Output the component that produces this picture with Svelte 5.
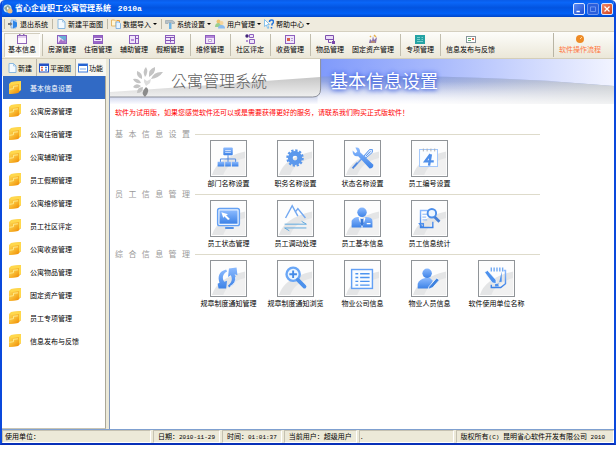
<script>
  const doc = '<path d="M2 .5h4.5L9 3v6.500H2z" fill="#f4faff" stroke="#8bb9e0"/><path d="M6.500 .5V3H9" fill="none" stroke="#8bb9e0" stroke-width=".7"/>';
  const menus = [
    { text: '退出系统', sep: true, icon: '<path d="M3 1h5v8H3z" fill="#c4dcf7" stroke="#78a8dc" stroke-width=".7"/><path d="M0 4h2V3l2.500 2L2 7V6H0z" fill="#777"/><path d="M5 1.500l4 2v4L5 9.500z" fill="#2f86e8"/>' },
    { text: '新建平面图', sep: true, icon: doc },
    { text: '数据导入', sep: true, arrow: true, icon: '<path d="M.5 1h3L5 2.500V7H.5z" fill="#fff6d8" stroke="#e0a84b" stroke-width=".8"/><path d="M5 3h3l1.500 1.500V9.500H5z" fill="#e8f4ff" stroke="#6ca6e0" stroke-width=".8"/><path d="M5.500 1.500h3v1.500" fill="none" stroke="#f0a030"/>' },
    { text: '系统设置', sep: true, arrow: true, icon: '<path d="M.5 1.500h7l2 1.500v1.500H7L6 3.500H4L3 4.500H.5z" fill="#b4c0c8" stroke="#87949d" stroke-width=".5"/><path d="M4 4h2.500v6H4z" fill="#6eb3e4"/>' },
    { text: '用户管理', arrow: true, icon: '<circle cx="3.500" cy="2.500" r="2" fill="#eec36d"/><path d="M0 8q0-4 3.500-4T7 8z" fill="#9bcf8d"/><circle cx="6.500" cy="4" r="2" fill="#f6d49a"/><path d="M3 9.500Q3 6 6.500 6T10 9.500z" fill="#8abcf0"/>' },
    { text: '帮助中心', arrow: true, icon: '<path d="M.5 .5v7L2.300 6l1.500 3.500 1-.5L3.500 5.500h2z" fill="#fff" stroke="#69b5eb" stroke-width=".8"/><path d="M5.500 3Q5.500 1 7.500 1t2 2q0 1-1.500 2v1.500M7.500 8v1.500" fill="none" stroke="#2274dc" stroke-width="1.500"/>' }
  ];
  const frame = '<rect x=".5" y="1.500" width="9" height="8" fill="#f0e5fa" stroke="#8d5fbe"/>';
  const tools = [
    { text: '基本信息', active: true, icon: '<rect x=".5" y="1.500" width="9" height="8" fill="#fff8ff" stroke="#8f64b8"/><path d="M1 3h8" stroke="#c4a4df"/><path d="M2 .5h1.500M6 .5h1.500" stroke="#8f64b8"/>', sep: true },
    { text: '房源管理', icon: frame + '<path d="M1 2h8v6z" fill="#6aaed6"/><path d="M1 9l3-4 2 2 2-2 1 4z" fill="#a873c8"/>' },
    { text: '住宿管理', icon: frame + '<path d="M1 3h8M1 8h8" stroke="#9b67c9" stroke-width="2"/><path d="M2.500 5.500h5" stroke="#5a338d"/>' },
    { text: '辅助管理', icon: frame + '<path d="M6.500 2v7M7 4.500h2" stroke="#8555b7"/><path d="M2 6h3" stroke="#bd8fe0" stroke-width="2"/>' },
    { text: '假期管理', icon: frame + '<path d="M1 3.500h8M1 6.500h8M5.500 3.500v5" stroke="#8555b7"/>', sep: true },
    { text: '维修管理', icon: frame + '<path d="M1 3h8" stroke="#b385d8" stroke-width="2"/><path d="M3.500 5.500h3v2h-3z" fill="#fff" stroke="#ab8ac8" stroke-width=".7"/>', sep: true },
    { text: '社区评定', icon: '<circle cx="2" cy="2" r="1.700" fill="#432579"/><path d="M4.500 .5h4v3h-4zM4.500 5.500h5v4h-5z" fill="#eee3f8" stroke="#8d5fbe"/><circle cx="2" cy="7" r="1" fill="#9d6fc6"/>', sep: true },
    { text: '收费管理', icon: frame + '<rect x="2" y="4" width="3" height="3" fill="#d86049"/><path d="M6 4.500h2M6 6.500h2" stroke="#b7a1cf"/>', sep: true },
    { text: '物品管理', icon: '<path d="M.5 1.500h8v4h-8z" fill="#eadcf6" stroke="#7d4fae"/><path d="M3.500 5v3.500h3M8.500 5v3" fill="none" stroke="#7d4fae"/><path d="M7 7h3v3H7z" fill="#7847ab"/>' },
    { text: '固定资产管理', icon: '<path d="M1 9l1-4 2 2 1-5 1 4 3-3-1 6z" fill="#8b70aa"/><path d="M6 1l2 2M2 2l1 1" stroke="#e8b14d" stroke-width="1.500"/><path d="M3 8h4" stroke="#dda34a"/>', sep: true },
    { text: '专项管理', icon: '<rect y="1" width="10" height="9" fill="#25a3a4"/><path d="M2 3.500h3M2 5.500h3M6.500 3.500H8M6.500 5.500H8M2 7.500h6" stroke="#9fe4df" stroke-width=".7"/>', sep: true },
    { text: '信息发布与反馈', icon: '<rect x=".5" y="2.500" width="9" height="6" fill="#fff" stroke="#87949c"/><path d="M2 4.500h3M2 6.500h3" stroke="#66b27a"/><path d="M6 4h2v2H6z" fill="#df6a4d"/>' },
    { text: '软件操作流程', end: true, icon: '<circle cx="5" cy="5" r="4" fill="#ee8b26"/><path d="M5 5l2-2" stroke="#ffd79a"/>' }
  ];
  const sideTabs = [
    { text: '新建', icon: doc },
    { text: '平面图', icon: '<rect x=".5" y="1" width="9" height="8" fill="#fff" stroke="#2553c6"/><path d="M1 2h8" stroke="#2553c6" stroke-width="2"/><path d="M2 4.500h2M2 7h2" stroke="#df6149" stroke-width="1.500"/><path d="M6 4.500h2M6 7h2" stroke="#438be5" stroke-width="1.500"/>' },
    { text: '功能', active: true, icon: '<rect x=".5" y="1" width="9" height="8" fill="#fff" stroke="#3978dc"/><path d="M1 2h8" stroke="#2563d1" stroke-width="2"/><path d="M2 6h6" stroke="#74a6ea"/>' }
  ];
  const nav = ['基本信息设置', '公寓房源管理', '公寓住宿管理', '公寓辅助管理', '员工假期管理', '公寓维修管理', '员工社区评定', '公寓收费管理', '公寓物品管理', '固定资产管理', '员工专项管理', '信息发布与反馈'];
  let current = $state(0);
  const B = 'fill="url(#ink)"';
  const L = 'fill="none" stroke="url(#ink)"';
  const sections = [
    { title: '基   本   信   息   设   置', items: [
      { text: '部门名称设置', icon: `<rect x="13" y="7" width="10" height="8" rx="1" ${B}/><path d="M15 10h6M15 12h6" stroke="#d6e6ff"/><path d="M18 15v4M10 23v-4h16v4M18 19v4" fill="none" stroke="#4c86e0"/><path d="M7 22h7v5H7zM15 22h6v5h-6zM22 22h7v5h-7z" ${B}/>` },
      { text: '职务名称设置', icon: `<circle cx="18" cy="18" r="5" fill="none" stroke="#5b98ec" stroke-width="5"/><circle cx="18" cy="18" r="8" fill="none" stroke="#5b98ec" stroke-width="2.500" stroke-dasharray="2.400 1.789"/>` },
      { text: '状态名称设置', icon: `<path d="M10 27L27 9" stroke="#6fa0ea" stroke-width="1.500"/><path d="M20 16l6-7 3 0 0 3-7 6z" fill="#dbe9ff" stroke="#5d98ec"/><path d="M22 16l5-5" stroke="#4f8ee8"/><path d="M8 10l3 3 2-2-2-4q5-1 5 5l14 13q0 4-4 4L14 16Q8 17 8 10z" ${B}/><path d="M8 29l5-6" stroke="#4e87df" stroke-width="2"/>` },
      { text: '员工编号设置', icon: `<rect x="8" y="9" width="19" height="18" fill="#fafdff" stroke="#9ec4fa"/><path d="M12 8v3M16 8v3M20 8v3M24 8v3" stroke="#aaa"/><path d="M19.500 14L14 21.500h9M20 14L18 26" fill="none" stroke="#4e8fea" stroke-width="2.500"/>` }
    ] },
    { title: '员   工   信   息   管   理', items: [
      { text: '员工状态管理', icon: `<rect x="7" y="8" width="23" height="18" rx="2" fill="#edf5ff" stroke="#64a1f4" stroke-width="1.500"/><rect x="9" y="10" width="19" height="14" ${B}/><path d="M11 12l7 2-2 1 4 4-2 1-4-4-1 2z" fill="#fff"/><path d="M15 28.500h9" stroke="#5592e6" stroke-width="2"/>` },
      { text: '员工调动处理', icon: `<path d="M8 18l7-13 6 11M18 12l3-4 8 10" fill="none" stroke="#72a8f1" stroke-width="1.500"/><path d="M7 24.500h23l-5-3M30 28.500H7l5 3" fill="none" stroke="#5aa5dd"/>` },
      { text: '员工基本信息', icon: `<circle cx="18" cy="12" r="5" ${B}/><path d="M7 28v-7q2-4 7-4l4 3 4-3q7 0 7 4v7z" ${B}/><path d="M15 18l3 9 3-9M23 24h4" fill="none" stroke="#fff" stroke-width="1.300"/><path d="M17 19h2l1 5-2 3-2-3z" fill="#3979da"/>` },
      { text: '员工信息统计', icon: `<path d="M17 10H9v18h2M22 22v6H11l-3-4h4v4" ${L} stroke-width="1.500"/><path d="M11 14h6M11 17h4M11 20h5" stroke="#82b2f5"/><circle cx="21" cy="13" r="4.500" fill="#edf6ff" stroke="#4c8feb" stroke-width="2"/><path d="M24 17l5 5" stroke="#467fd5" stroke-width="3"/>` }
    ] },
    { title: '综   合   信   息   管   理', items: [
      { text: '规章制度通知管理', icon: `<path d="M16 9C8 11 7 17 9 23l-2 1 1 5 8 0 1-8-3 1C11 17 13 13 17 11z" ${B}/><path d="M19 8l8-1 1 8-3-1c3 6 0 11-6 14l-1-2c4-3 5-7 3-11l-3 2z" ${B}/><path d="M26 17q1 6-6 10" fill="none" stroke="#fff" stroke-width=".8"/>` },
      { text: '规章制度通知浏览', icon: `<circle cx="16" cy="14" r="7" fill="#edf6ff" stroke="#69a6f6" stroke-width="2.500"/><path d="M12 14h8M16 10v8" stroke="#438ae8" stroke-width="2"/><path d="M21 20l7 7" stroke="#4c91ec" stroke-width="4" stroke-linecap="round"/>` },
      { text: '物业公司信息', icon: `<rect x="7" y="9" width="22" height="20" fill="#f9fcff" stroke="#63a0f5" stroke-width="1.500"/><path d="M11 13.500h3M11 17.500h3M11 21.500h3M11 25.500h3M16 13.500h10M16 17.500h10M16 21.500h10M16 25.500h10" stroke="#4d94ef" stroke-width="1.500"/>` },
      { text: '物业人员信息', icon: `<circle cx="16" cy="13" r="5" ${B}/><path d="M6 29v-5q2-5 8-6h5l3 3-4 8z" ${B}/><path d="M18 27l8-9 3 2-7 8-5 2z" fill="#3e82df" stroke="#fff" stroke-width=".8"/>` },
      { text: '软件使用单位名称', icon: `<path d="M13 7v4M16 7v4M19 7v4M22 7v4M25 7v4" stroke="#73aaf3" stroke-width="1.500"/><path d="M26 10h2v14l-5 4H13v-3" ${L} stroke-width="1.500"/><path d="M24 11v11q-5 0-3 5h-4v-3h4z" fill="#4d91ed"/><path d="M6 12l3-2 9 10v4l-4-1z" fill="#4d91ed" stroke="#fff" stroke-width=".7"/>` }
    ] }
  ];
</script>

{#snippet small(icon)}
  <svg class="small" viewBox="0 0 10 10" aria-hidden="true">{@html icon}</svg>
{/snippet}

<div class="page">
  <div class="window">
    <header class="title">
      <svg class="logo" viewBox="0 0 10 10" aria-hidden="true"><circle cx="4.500" cy="4.500" r="4" fill="#c9e4ed" /><path d="M1 4l4-3 3 3-4 4z" fill="#8aa4a2" /><circle cx="7" cy="7" r="2.500" fill="#edbd83" /><path d="M4 3l2 1-2 2z" fill="#fff" /></svg>
      <h1>省心企业职工公寓管理系统 <span>2010a</span></h1>
      <div class="controls">
        <button aria-label="最小化"><svg viewBox="0 0 12 12"><path d="M3 9h4" stroke="#fff" stroke-width="2" /></svg></button>
        <button class="dim" aria-label="最大化"><svg viewBox="0 0 12 12"><path d="M3 3.500h6v5.500H3z" fill="none" stroke="#7ba0f5" /></svg></button>
        <button class="close" aria-label="关闭"><svg viewBox="0 0 12 12"><path d="M3 3l6 6M9 3L3 9" stroke="#fff" stroke-width="1.500" /></svg></button>
      </div>
    </header>

    <nav class="menu">
      {#each menus as m}
        <button class:sep={m.sep}>{@render small(m.icon)}<span>{m.text}</span>{#if m.arrow}<i></i>{/if}</button>
      {/each}
    </nav>

    <nav class="tools">
      {#each tools as t}
        <button class:active={t.active} class:end={t.end}>{@render small(t.icon)}<span>{t.text}</span></button>
        {#if t.sep}<b></b>{/if}
      {/each}
    </nav>

    <div class="body">
      <aside>
        <div class="tabs">
          {#each sideTabs as t}
            <button class:active={t.active}>{@render small(t.icon)}<span>{t.text}</span></button>
          {/each}
        </div>
        <div class="list">
          {#each nav as text, i}
            <button class:selected={i === current} onclick={() => (current = i)}>
              <svg viewBox="0 0 14 15" aria-hidden="true"><path d="M1 4l2-2 10-1v9l-3 3-9 1z" fill="url(#gold)" /><path d="M3 2l10-1v9l-2 1V4L3 5z" fill="#ffd84c" /><path d="M1 9l4-.5V6l6-.7V11l-1 2-9 1z" fill="url(#gold)" /><path d="M1.500 9.300l4-.6V6.300l4.500-.5" fill="none" stroke="#fff09b" stroke-width=".8" /></svg>
              <span>{text}</span>
            </button>
          {/each}
        </div>
      </aside>

      <main>
        <div class="banner">
          <svg class="art" viewBox="0 0 505 45" preserveAspectRatio="none" aria-hidden="true">
            <defs>
              <linearGradient id="sky"><stop offset=".4" stop-color="#7d98fb" /><stop offset=".65" stop-color="#a9bafc" /><stop offset="1" stop-color="#f2f4ff" /></linearGradient>
              <linearGradient id="wave" x2="0" y2="1"><stop stop-color="#8198df" stop-opacity=".9" /><stop offset=".45" stop-color="#aebbe8" /><stop offset="1" stop-color="#fafaff" /></linearGradient>
              <linearGradient id="grey"><stop offset=".35" stop-color="#d0d0d0" stop-opacity="0" /><stop offset="1" stop-color="#c9cdd1" /></linearGradient>
              <linearGradient id="mist" x2="0" y2="1"><stop offset=".2" stop-color="#fff" stop-opacity="0" /><stop offset="1" stop-color="#fff" stop-opacity=".75" /></linearGradient>
              <linearGradient id="swoosh" x2="0" y2="1"><stop stop-color="#c6c6c6" /><stop offset="1" stop-color="#f0f0f0" /></linearGradient>
              <linearGradient id="under" x2="0" y2="1"><stop stop-color="#c6cee8" /><stop offset="1" stop-color="#fbfbff" /></linearGradient>
              <linearGradient id="ink" x2="0" y2="1"><stop stop-color="#8bbaff" /><stop offset="1" stop-color="#3d82e6" /></linearGradient>
              <linearGradient id="gold" x2="1" y2="1"><stop stop-color="#ffe35d" /><stop offset="1" stop-color="#f08a00" /></linearGradient>
            </defs>
            <path d="M0 0h505v45H0z" fill="url(#sky)" />
            <path d="M190 18q170-4 315 9v18H190z" fill="url(#wave)" />
            <path d="M190 18q170-4 315 9v18H190z" fill="url(#grey)" />
            <path d="M190 18q170-4 315 9v18H190z" fill="url(#mist)" />
            <path d="M0 36h208v9H0z" fill="url(#under)" />
            <path d="M0 0h211v30q0 8-8 8H0z" fill="#fff" />
            <path d="M0 33Q100 26 211 18v12q0 8-8 8H0z" fill="url(#swoosh)" />
            <path d="M211 0v30q0 8-8 8H0" fill="none" stroke="#8b8f9a" />
          </svg>
          <svg class="flower" viewBox="0 0 30 32" aria-hidden="true">
            <g fill="#c4c4c4"><path d="M12 11Q9 5 13 1q3 5-1 10zM16 11q-1-8 6-10 1 6-6 10zM18 13q3-8 12-7-4 6-12 7zM9 13Q3 11 4 5q6 2 5 8zM8 17q-6 1-8-4 6-1 8 4zM8 20q-4 4-8 1 3-5 8-1zM10 21q0 6-6 6 0-6 6-6z" /><path d="M13 21q5 3-1 10-5-4 1-10z" fill="#8b8b8b" /><path d="M11 13l3 2 4-2-1 4-4 3-2-4z" fill="#ddd" /></g>
          </svg>
          <p class="brand">公寓管理系統</p>
          <h2>基本信息设置</h2>
        </div>

        <div class="content">
          <p class="notice">软件为试用版，如果您感觉软件还可以或是需要获得更好的服务，请联系我们购买正式版软件！</p>
          {#each sections as s}
            <section>
              <h3>{s.title}</h3>
              <div class="grid">
                {#each s.items as item}
                  <button>
                    <svg viewBox="0 0 37 37" aria-hidden="true"><path d="M1 36Q6 18 36 11v25z" fill="#e4e5e6" /><path d="M13 36q4-13 23-18v18z" fill="#f1f1f1" />{@html item.icon}</svg>
                    <span>{item.text}</span>
                  </button>
                {/each}
              </div>
            </section>
          {/each}
        </div>
      </main>
    </div>

    <footer>
      <span class="unit">使用单位：</span>
      <span>日期：<time>2010-11-29</time></span>
      <span>时间：<time>01:01:37</time></span>
      <span>当前用户：超级用户</span>
      <span class="rest">.</span>
      <span class="copy">版权所有<code>{'(C) '}</code>昆明省心软件开发有限公司<code>{' 2010'}</code></span>
    </footer>
  </div>
</div>

<style>
  :global(body) { margin: 0; background: #fff; }
  .page { box-sizing: border-box; display: flex; min-height: 100vh; padding-bottom: 17px; font: 7px/10px "Noto Sans CJK SC", sans-serif; color: #000; }
  .window { flex: 1; min-width: 0; display: flex; flex-direction: column; box-sizing: border-box; border: 2px solid #0a48dc; border-top: 0; border-bottom-color: #0830b8; border-radius: 5px 5px 0 0; background: #ece9d8; overflow: hidden; }
  button { display: flex; align-items: center; padding: 0; border: 0; background: none; font: inherit; color: inherit; white-space: nowrap; }
  svg { display: block; flex: none; }
  h1, h2, h3, p { margin: 0; white-space: nowrap; }
  .small { width: 10px; height: 10px; }

  .title { display: flex; align-items: center; height: 17px; padding: 0 1px; background: linear-gradient(#0a5ce8, #0a66f8 15%, #0354e0 45%, #0160f6 80%, #0145c8); }
  .logo { width: 10px; height: 10px; margin-right: 2px; }
  h1 { font-size: 8px; line-height: 12px; font-weight: 700; color: #fff; }
  h1 span { margin-left: 5px; font-family: "Liberation Mono", monospace; }
  .controls { display: flex; gap: 2px; margin-left: auto; }
  .controls button { box-sizing: border-box; width: 12px; height: 12px; border: 1px solid #dce7ff; border-radius: 2px; background: linear-gradient(135deg, #5c8cf4, #1c4cd2); }
  .controls button.dim { border-color: #6f95ee; background: #2a5edc; }
  .controls button.close { background: linear-gradient(135deg, #f08a68, #d3401c); }
  .controls svg { width: 10px; height: 10px; }

  .menu { display: flex; align-items: center; height: 14px; padding-left: 2px; background: #efebde; border-bottom: 1px solid #d5d0c0; }
  .menu button { gap: 2px; padding: 0 3px 0 0; }
  .menu .sep { padding: 0 4px 0 3px; border-left: 1px solid #bdb8a6; }
  .menu i { border: 2px solid transparent; border-top-color: #000; border-bottom: 0; }

  .tools { display: flex; align-items: center; height: 26px; padding: 0 9px 0 2px; border-bottom: 1px solid #d4ceb9; background: linear-gradient(#fdfdfa, #ebe7d8); }
  .tools button { box-sizing: border-box; flex-direction: column; height: 24px; padding: 1px 4px 0; }
  .tools .active { background: #f9f8f3; box-shadow: inset 1px 1px #d2cebf, inset -1px -1px #fff; }
  .tools .end { margin-left: auto; padding-left: 5px; border-left: 1px solid #b9b5a5; color: #ff7640; }
  .tools b { width: 1px; height: 22px; margin: 0 1px 0 2px; background: #c2beae; }

  .body { flex: 1; display: flex; min-height: 0; }
  aside { display: flex; flex-direction: column; width: 104px; padding-right: 3px; }
  .tabs { display: flex; height: 17px; padding-left: 3px; }
  .tabs button { gap: 1px; padding: 0 4px 0 2px; }
  .tabs button + button { border-left: 1px solid #bab6a8; }
  .tabs .active { flex: 1; padding-right: 0; background: #f8f7f2; }
  .list { flex: 1; padding-left: 1px; background: #fff; border-right: 1px solid #aaa798; border-bottom: 1px solid #c8c4b4; }
  .list button { width: 100%; height: 23px; padding-left: 5px; gap: 8px; }
  .list svg { width: 14px; height: 15px; }
  .list .selected { background: #316ac5; color: #fff; }

  main { flex: 1; min-width: 0; border-left: 1px solid #8298bc; background: #fff; }
  .banner { position: relative; display: flex; align-items: center; height: 45px; }
  .art { position: absolute; inset: 0; width: 100%; height: 100%; }
  .flower { position: relative; width: 30px; height: 32px; margin: 0 8px 0 23px; }
  .brand { position: relative; width: 159px; font: 300 16px/28px "Noto Sans CJK TC", sans-serif; color: #606060; padding-bottom: 4px; }
  h2 { position: relative; padding-bottom: 4px; font-size: 18px; line-height: 28px; font-weight: 400; color: #fff; text-shadow: 0 1px 4px #3d5fdc, 0 0 5px #4668e6; }

  .content { max-width: 425px; padding: 3px 5px 0; }
  .notice { margin-bottom: 11px; color: #f00; }
  h3 { display: flex; align-items: center; gap: 5px; font-size: 8px; line-height: 12px; font-weight: 400; color: #999; white-space: pre; }
  h3::after { content: ""; flex: 1; height: 1px; background: #dedbcb; }
  .grid { display: grid; grid-template-columns: repeat(5, 67px); padding-left: 80px; }
  .grid button { flex-direction: column; gap: 1px; }
  .grid svg { box-sizing: border-box; width: 37px; height: 37px; border: 1px solid #909498; background: #fdfdfd; }

  footer { display: flex; gap: 2px; height: 13px; line-height: 11px; border-top: 1px solid #7fa0d0; white-space: nowrap; }
  footer span { box-sizing: border-box; padding: 0 4px; border: 1px solid #fff; border-top-color: #c5c1b1; border-left-color: #c5c1b1; }
  footer .unit { width: 149px; padding-left: 2px; }
  footer .rest { flex: 1; padding-left: 1px; }
  footer .copy { padding-right: 8px; }
  time, code { font: 6px/10px "Liberation Mono", monospace; white-space: pre; }
</style>
